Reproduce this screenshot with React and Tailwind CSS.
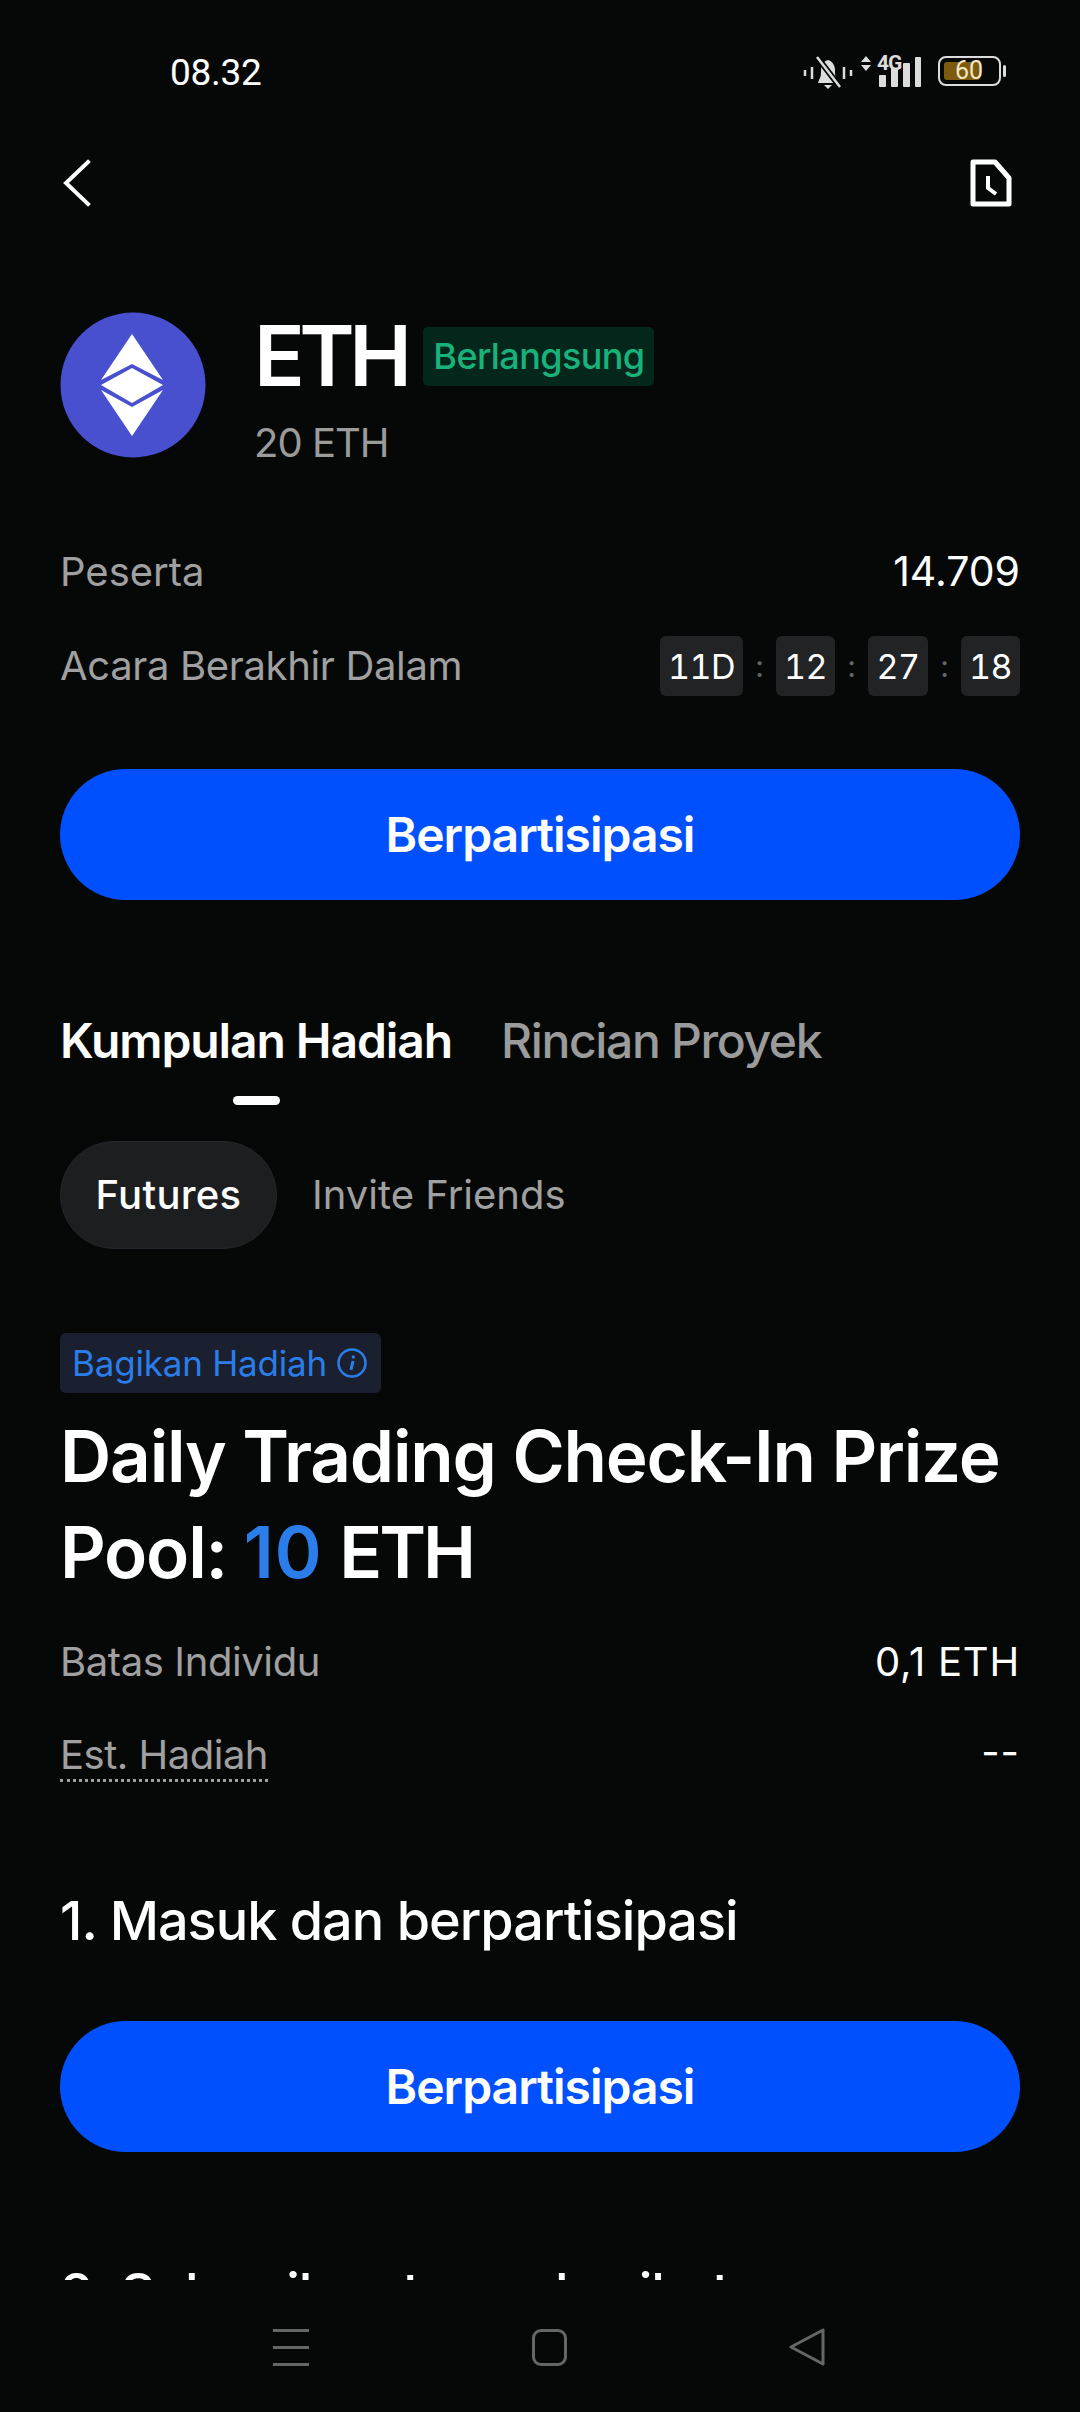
const sans = "font-['Inter','Noto_Sans',sans-serif]";

function Bell() {
  return (
    <svg width="50" height="36" viewBox="0 0 50 36" className="text-[#dcdcdc]">
      <path d="M16 25c2-3 2-6 2-10 0-5 3-9 7-10 4 1 7 5 7 10 0 4 0 7 2 10l1 3H15z" fill="currentColor" />
      <path d="M21 30h8l-4 4z" fill="currentColor" />
      <path d="M14 2l23 30" stroke="#060808" strokeWidth="6" />
      <path d="M14 2l23 30" stroke="currentColor" strokeWidth="2.5" />
      <path d="M2 15v6M9 12v12M41 12v12M48 15v6" stroke="currentColor" strokeWidth="2.5" />
    </svg>
  );
}

function StatusIcons() {
  return (
    <div className="flex items-start">
      <div className="mt-[1px]"><Bell /></div>
      <svg width="12" height="15" viewBox="0 0 12 15" className="ml-[7px] mt-[2px]">
        <path d="M6 0l5 6H1zM1 9h10l-5 6z" fill="#dcdcdc" />
      </svg>
      <div className="relative ml-[5px] h-[34px] w-[46px]">
        <span className="absolute left-0 top-[1px] text-[21px] leading-[17px] font-bold tracking-[-1px] text-[#dcdcdc] font-['Roboto',sans-serif]">4G</span>
        <svg width="44" height="32" viewBox="0 0 44 32" className="absolute left-0 top-[2px]">
          <rect x="2" y="19" width="7" height="12" rx="1" fill="#dcdcdc" />
          <rect x="14" y="12" width="7" height="19" rx="1" fill="#dcdcdc" />
          <rect x="26" y="7" width="7" height="24" rx="1" fill="#dcdcdc" />
          <rect x="38" y="1" width="6" height="30" rx="1" fill="#dcdcdc" />
        </svg>
      </div>
      <div className="relative ml-[15px] mt-[2px] h-[30px] w-[63px] rounded-[8px] border-2 border-[#dcdcdc]">
        <div className="absolute bottom-[4px] left-[4px] top-[4px] w-[36px] rounded-[3px] bg-[#7c5a10]" />
        <span className="absolute left-[15px] top-0 text-[25px] leading-[26px] text-[#f3e6c4] font-['Roboto',sans-serif]">60</span>
        <div className="absolute right-[-7px] top-[7px] h-[12px] w-[3px] rounded-sm bg-[#dcdcdc]" />
      </div>
    </div>
  );
}

function PrimaryButton() {
  return (
    <div className="flex h-[131px] items-center justify-center rounded-full bg-[#0050ff] text-[48px] font-semibold tracking-[-1px] text-white">
      Berpartisipasi
    </div>
  );
}

function TimeBox({ children, w }) {
  return <div className={`flex h-[60px] items-center justify-center rounded-[6px] bg-[#222324] text-[34px] tabular-nums tracking-[-0.5px] text-white ${w}`}>{children}</div>;
}

function Colon() {
  return <span className="flex w-[33px] justify-center text-[30px] text-[#666]">:</span>;
}

export default function App() {
  return (
    <div className={`${sans} relative flex h-[2412px] w-[1080px] flex-col overflow-hidden bg-[#060808] text-white`}>
      {/* status bar */}
      <div className="flex h-[148px] shrink-0 items-start justify-between pl-[170px] pr-[79px] pt-[54px]">
        <span className="text-[37px] leading-[37px] tracking-[-0.3px] font-['Roboto',sans-serif]">08.32</span>
        <StatusIcons />
      </div>

      {/* nav */}
      <div className="flex h-[70px] shrink-0 items-center justify-between pl-[63px] pr-[68px]">
        <svg width="28" height="48" viewBox="0 0 28 48" fill="none" stroke="white" strokeWidth="4" strokeLinecap="square">
          <path d="M25 3L3 24l22 21" />
        </svg>
        <svg width="42" height="48" viewBox="0 0 42 48" fill="none" stroke="white" strokeWidth="5" strokeLinejoin="round">
          <path d="M3 3h22l14 16v26H3z" />
          <path d="M18 17v12l8 6" strokeWidth="4" />
        </svg>
      </div>

      {/* header */}
      <div className="mt-[94px] flex shrink-0 px-[60px]">
        <svg width="146" height="146" viewBox="0 0 146 146" className="shrink-0">
          <circle cx="73" cy="73" r="72.5" fill="#4850d0" />
          <path d="M72 22l31 46-31-16-31 16z" fill="white" />
          <path d="M72 56l31 17-31 18-31-18z" fill="white" />
          <path d="M41 78l31 17 31-17-31 46z" fill="white" />
        </svg>
        <div className="ml-[48px] flex flex-col">
          <div className="mt-[13px] flex h-[62px] items-center">
            <span className="text-[84px] leading-[62px] font-semibold tracking-[-5.5px]">ETH</span>
            <span className="ml-[17px] flex h-[59px] w-[231px] items-center justify-center rounded-[5px] bg-[#04271b] text-[36px] font-medium tracking-[-0.6px] text-[#19b27b]">Berlangsung</span>
          </div>
          <span className="mt-[36px] text-[40px] leading-[40px] tracking-[-1px] text-[#9b9b9b]">20 ETH</span>
        </div>
      </div>

      {/* stats */}
      <div className="mt-[87px] flex h-[44px] shrink-0 items-center justify-between px-[60px]">
        <span className="text-[40px] text-[#a0a0a0]">Peserta</span>
        <span className="text-[41px]">14.709</span>
      </div>
      <div className="mt-[42px] flex shrink-0 items-center justify-between px-[60px]">
        <span className="text-[40px] tracking-[-0.35px] text-[#a0a0a0]">Acara Berakhir Dalam</span>
        <div className="flex items-center">
          <TimeBox w="w-[83px]">11D</TimeBox>
          <Colon />
          <TimeBox w="w-[59px]">12</TimeBox>
          <Colon />
          <TimeBox w="w-[60px]">27</TimeBox>
          <Colon />
          <TimeBox w="w-[59px]">18</TimeBox>
        </div>
      </div>

      <div className="mt-[73px] shrink-0 px-[60px]"><PrimaryButton /></div>

      {/* tabs */}
      <div className="mt-[112px] flex shrink-0 items-center gap-[49px] px-[60px] text-[48px] leading-[58px]">
        <span className="font-semibold tracking-[-1.1px]">Kumpulan Hadiah</span>
        <span className="font-medium tracking-[-1.35px] text-[#9b9b9b]">Rincian Proyek</span>
      </div>
      <div className="ml-[233px] mt-[26px] h-[9px] w-[47px] shrink-0 rounded-full bg-white" />

      {/* pills */}
      <div className="mt-[36px] flex shrink-0 items-center gap-[35px] px-[60px] text-[40px]">
        <span className="flex h-[108px] w-[217px] items-center justify-center rounded-full border border-[#24272a] bg-[#1c1e20] font-medium tracking-[0.3px]">Futures</span>
        <span className="text-[#a0a0a0]">Invite Friends</span>
      </div>

      {/* prize */}
      <div className="ml-[60px] mt-[84px] flex h-[60px] w-[321px] shrink-0 items-center gap-[10px] rounded-[6px] bg-[#1a2030] pl-[12px] text-[35px] text-[#2b7de9]">
        <span className="tracking-[-0.2px]">Bagikan Hadiah</span>
        <svg width="30" height="30" viewBox="0 0 30 30" fill="none" stroke="currentColor" strokeWidth="2.5">
          <circle cx="15" cy="15" r="13.5" />
          <path d="M16 13l-2 9" strokeWidth="3" />
          <path d="M16.3 7.5v3" strokeWidth="3" />
        </svg>
      </div>
      <h1 className="mt-[15px] shrink-0 px-[60px] text-[71px] leading-[96px] font-semibold tracking-[-1.2px]">
        Daily Trading Check-In Prize<br />Pool: <span className="tracking-[1px] text-[#2b7de9]">10</span> <span className="tracking-[-3px]">ETH</span>
      </h1>

      <div className="mt-[38px] flex h-[48px] shrink-0 items-center justify-between px-[60px]">
        <span className="text-[40px] tracking-[-0.4px] text-[#a0a0a0]">Batas Individu</span>
        <span className="text-[40px] tracking-[0.8px]">0,1 ETH</span>
      </div>
      <div className="mt-[44px] flex h-[52px] shrink-0 items-start justify-between px-[60px]">
        <span className="border-b-[3px] border-dotted border-[#a0a0a0] text-[40px] leading-[49px] tracking-[-0.5px] text-[#a0a0a0]">Est. Hadiah</span>
        <span className="text-[40px] leading-[44px] tracking-[1px]">--</span>
      </div>

      <h2 className="mt-[106px] shrink-0 px-[60px] text-[54px] leading-[66px] font-medium tracking-[-1px]">1. Masuk dan berpartisipasi</h2>
      <div className="mt-[67px] shrink-0 px-[60px]"><PrimaryButton /></div>

      <div className="mt-[116px] h-[12px] shrink-0 overflow-hidden px-[60px]">
        <h2 className="mt-[-8px] text-[54px] leading-[66px] font-medium tracking-[-1px]">2. Selesaikan tugas berikut</h2>
      </div>

      {/* system nav */}
      <div className="relative flex-1">
        <div className="absolute left-[273px] top-[49px] flex h-[37px] w-[36px] flex-col justify-between">
          <div className="h-[3px] bg-[#666]" /><div className="h-[3px] bg-[#666]" /><div className="h-[3px] bg-[#666]" />
        </div>
        <div className="absolute left-[532px] top-[49px] h-[37px] w-[35px] rounded-[9px] border-[3px] border-[#666]" />
        <svg width="36" height="38" viewBox="0 0 36 38" fill="none" stroke="#666" strokeWidth="3" strokeLinejoin="round" className="absolute left-[789px] top-[48px]">
          <path d="M34 2v34L2 19z" />
        </svg>
      </div>
    </div>
  );
}
